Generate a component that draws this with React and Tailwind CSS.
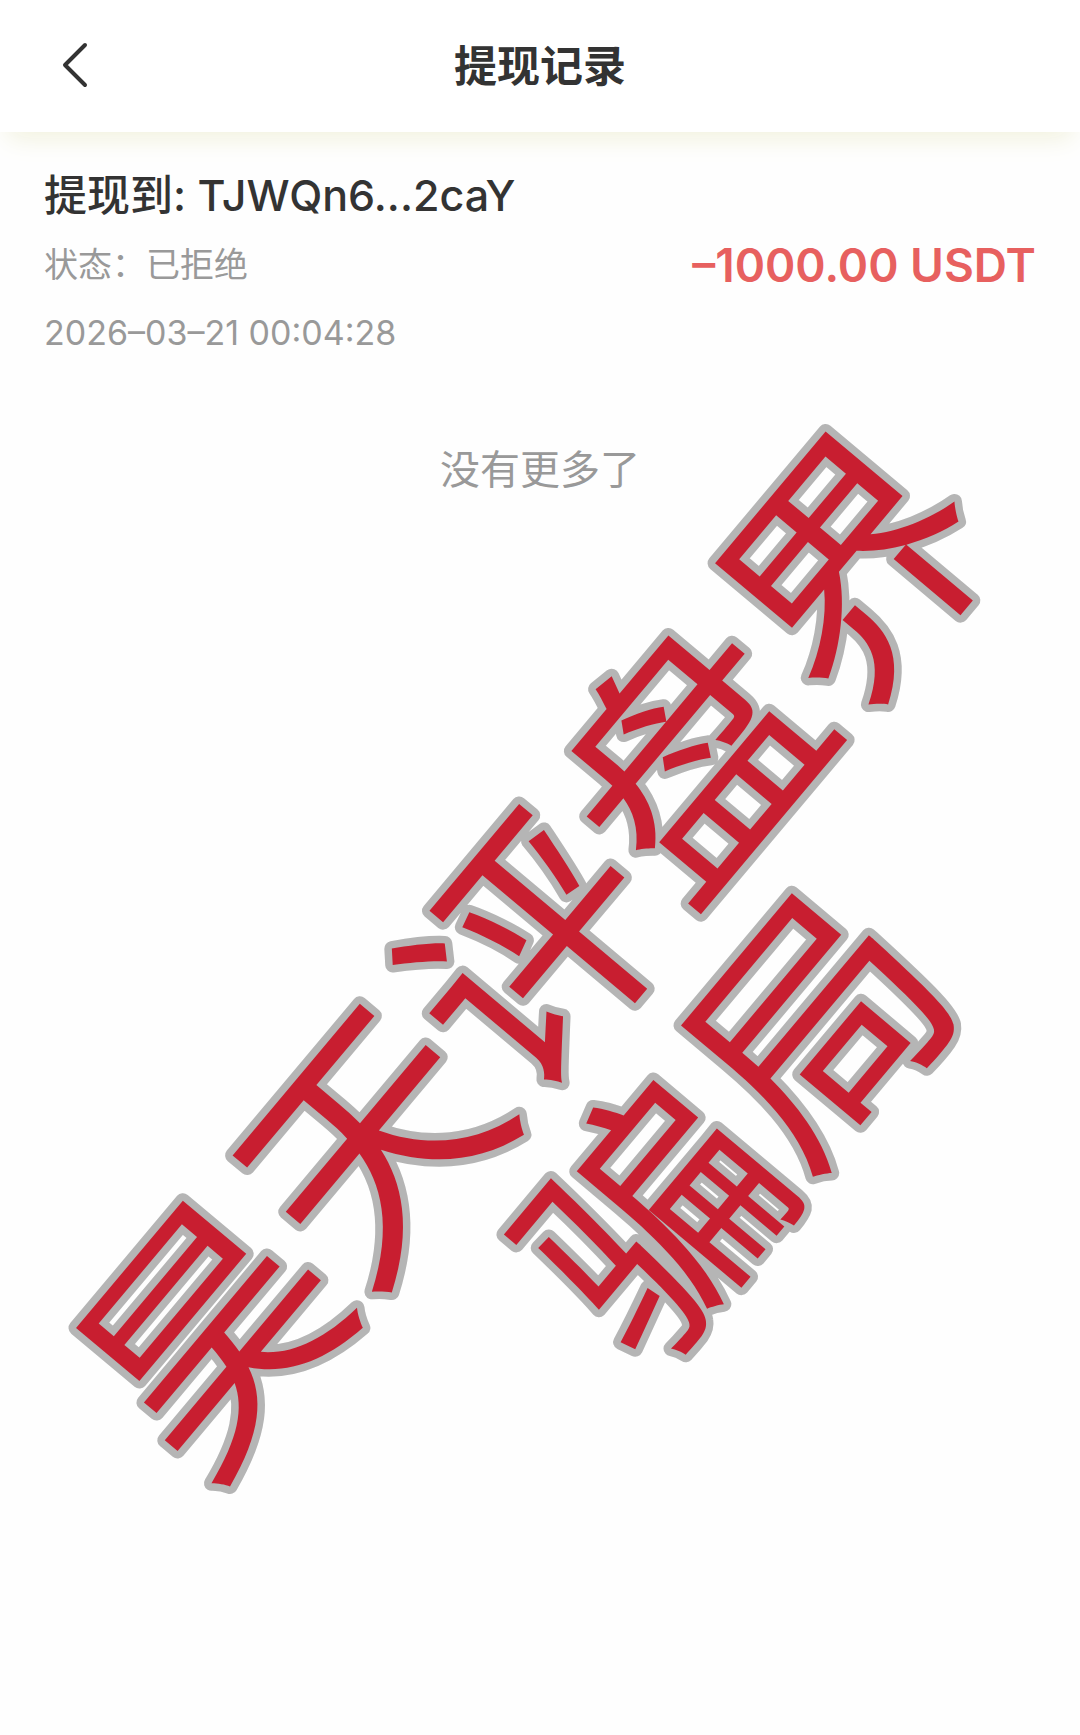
const records = [
  {
    id: 1,
    address: "TJWQn6...2caY",
    status: "已拒绝",
    time: "2026–03–21 00:04:28",
    amount: "–1000.00 USDT",
  },
];

function Header() {
  return (
    <header className="relative z-10 grid h-[132px] grid-cols-[1fr_auto_1fr] items-center bg-white shadow-[0_14px_24px_-8px_#f1f1dc]">
      <button type="button" aria-label="返回" className="ml-14 flex h-16 w-10 items-center">
        <svg viewBox="0 0 40 56" className="h-14 w-10" fill="none" stroke="#333333" strokeWidth="4" strokeLinecap="round" strokeLinejoin="round">
          <path d="M29 7 L9 27 L29 47" />
        </svg>
      </button>
      <h1 className="text-[43px] leading-[60px] font-bold">提现记录</h1>
    </header>
  );
}

function RecordItem({ record }) {
  return (
    <li className="px-11">
      <h2 className="text-[43px] leading-[60px] font-medium">提现到: {record.address}</h2>
      <div className="flex items-center justify-between pt-1">
        <p className="text-[34px] leading-[72px] text-[#999999]">状态：{record.status}</p>
        <p className="text-[46px] leading-[72px] font-semibold text-[#e7605f]">{record.amount}</p>
      </div>
      <time className="block text-[34px] leading-[64px] text-[#999999]">{record.time}</time>
    </li>
  );
}

// Diagonal stamp laid over the whole page
function Watermark() {
  return (
    <svg
      viewBox="0 0 1080 1200"
      className="pointer-events-none absolute inset-x-0 top-[360px] w-full overflow-visible"
      fill="#c81e30"
      stroke="#b5b5b5"
      strokeWidth="15"
      strokeLinejoin="round"
      paintOrder="stroke"
      fontSize="250"
      textAnchor="middle"
    >
      <g transform="translate(634 676) rotate(-50)">
        <text y="-40">昊天评盘界</text>
        <text y="226">骗局</text>
      </g>
    </svg>
  );
}

export default function App() {
  return (
    <div className="relative min-h-screen overflow-hidden bg-[#fefefe] font-['Inter','Noto_Sans_CJK_SC',sans-serif] text-[#333333]">
      <Header />
      <main>
        <ul className="pt-[33px]">
          {records.map((record) => (
            <RecordItem key={record.id} record={record} />
          ))}
        </ul>
        <p className="pt-[75px] text-center text-[40px] leading-[60px] text-[#999999]">没有更多了</p>
      </main>
      <Watermark />
    </div>
  );
}
